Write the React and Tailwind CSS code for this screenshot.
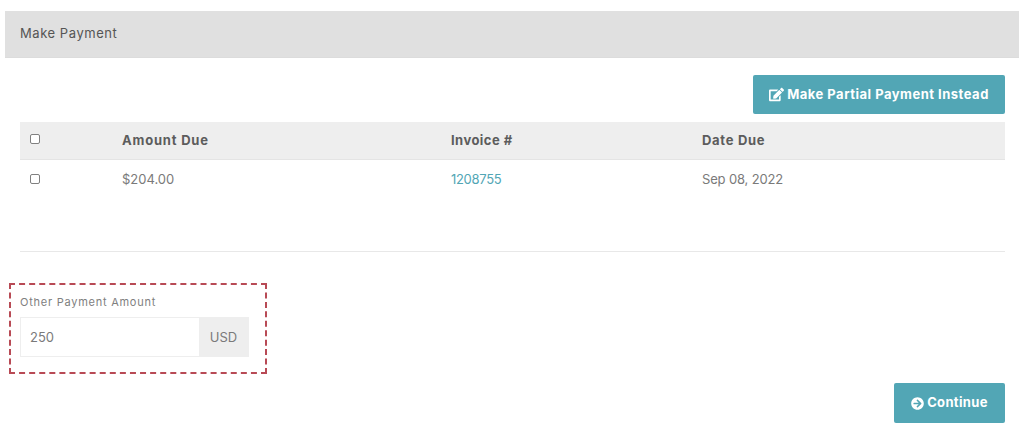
import React from "react";
import { FaEdit, FaArrowCircleRight } from "react-icons/fa";

const font = "font-['Inter','Liberation_Sans',sans-serif]";

function Check() {
  return <span className="block w-[10px] h-[10px] rounded-[2px] border border-[#808080] bg-white" />;
}

export default function App() {
  return (
    <div className={`${font} w-[1024px] h-[436px] bg-white overflow-hidden pt-[11px] pl-[5px] pr-[5px] text-[#666666]`}>
      <div className="h-[47px] bg-[#e0e0e0] flex items-center pl-[15px] text-[13px] text-[#555555] tracking-[0.55px] border-b border-[#dcdcdc]">
        Make Payment
      </div>
      <div className="pl-[15px] pr-[14px]">
        <div className="flex justify-end mt-[17px]">
          <button className="w-[252px] h-[39px] bg-[#52a6b5] rounded-[2px] text-white text-[13px] font-bold tracking-[0.5px] flex items-center justify-center gap-[3px]">
            <FaEdit className="text-[15px]" />
            Make Partial Payment Instead
          </button>
        </div>
        <div className="mt-[8px] grid grid-cols-[102px_329px_251px_1fr] h-[38px] items-center bg-[#eeeeee] border-b border-[#e4e4e4] text-[13px] font-bold text-[#5c5c5c]">
          <div className="pl-[10px] pb-[3px]"><Check /></div>
          <div className="tracking-[0.8px]">Amount Due</div>
          <div className="tracking-[0.45px]">Invoice #</div>
          <div className="tracking-[0.7px]">Date Due</div>
        </div>
        <div className="grid grid-cols-[102px_329px_251px_1fr] h-[38px] items-center text-[13px] text-[#7a7a7a] pt-[1px]">
          <div className="pl-[10px] pb-[2px]"><Check /></div>
          <div>$204.00</div>
          <div className="text-[#52a6b5] tracking-[-0.3px]">1208755</div>
          <div className="tracking-[-0.15px]">Sep 08, 2022</div>
        </div>
        <div className="mt-[53px] h-px bg-[#e8e8e8]" />
      </div>
      <div className="mt-[31px] ml-[4px] w-[258px] h-[91px] border-2 border-dashed border-[#b84a55] pl-[9px] pt-[10px]">
        <div className="text-[11px] leading-[14px] text-[#808080] tracking-[0.75px]">Other Payment Amount</div>
        <div className="mt-[8px] w-[229px] h-[40px] border border-[#eeeeee] flex text-[13px] text-[#7a7a7a]">
          <div className="flex-1 flex items-center pl-[9px] pt-[1px]">250</div>
          <div className="w-[49px] bg-[#eeeeee] flex items-center justify-center pt-[1px]">USD</div>
        </div>
      </div>
      <div className="flex justify-end pr-[14px] mt-[9px]">
        <button className="w-[111px] h-[40px] bg-[#52a6b5] rounded-[2px] text-white text-[13px] font-bold tracking-[0.35px] flex items-center justify-center gap-[3px]">
          <FaArrowCircleRight className="text-[13px]" />
          Continue
        </button>
      </div>
    </div>
  );
}
